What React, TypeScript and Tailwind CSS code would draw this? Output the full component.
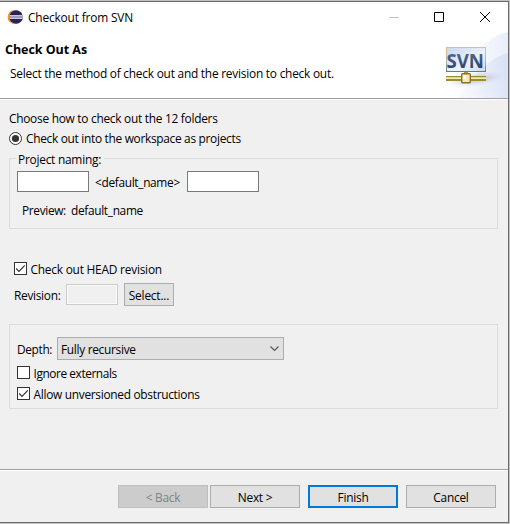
import type { ReactNode } from "react";

function Check({ checked, label, track }: { checked: boolean; label: string; track: string }) {
  return (
    <div className="flex h-[13px] items-center gap-[3.5px]">
      <span className="flex size-[13px] shrink-0 border border-[#333] bg-white">
        {checked && (
          <svg width="11" height="11" viewBox="0 0 11 11" fill="none" stroke="#333" strokeWidth="1.2">
            <path d="M1.2 5.5 L4 8.3 L9.8 2.4" />
          </svg>
        )}
      </span>
      <span className={track}>{label}</span>
    </div>
  );
}

function Button({ children, kind }: { children: ReactNode; kind: "disabled" | "normal" | "primary" }) {
  const look = {
    disabled: "border border-[#bfbfbf] bg-[#ccc] text-[#838383]",
    normal: "border border-[#adadad] bg-[#e1e1e1]",
    primary: "border-2 border-[#0078d7] bg-[#e1e1e1]",
  }[kind];
  return (
    <button className={`flex h-[23px] w-[90px] items-center justify-center tracking-[-0.25px] ${look}`}>{children}</button>
  );
}

function EclipseIcon() {
  return (
    <svg width="16" height="16" viewBox="0 0 16 16">
      <circle cx="7.6" cy="8" r="7" fill="#f7941e" />
      <circle cx="9" cy="8" r="7" fill="#fbe3c8" />
      <circle cx="9" cy="8" r="6.8" fill="#2c2255" />
      <path d="M2.6 6h13v1h-13zM2.6 9h13v1h-13z" fill="#c9c6d8" />
      <path d="M2 7h14v2H2z" fill="#a09cbd" />
    </svg>
  );
}

function SvnBanner() {
  return (
    <svg width="75" height="66" viewBox="0 0 75 66">
      <defs>
        <linearGradient id="sky" x1="0" y1="0" x2="1" y2="0">
          <stop offset="0" stopColor="#fff" />
          <stop offset="0.5" stopColor="#f8fafe" />
          <stop offset="1" stopColor="#e9eefa" />
        </linearGradient>
        <linearGradient id="sky2" x1="0" y1="0.6" x2="1" y2="0.4">
          <stop offset="0" stopColor="#f8faff" />
          <stop offset="1" stopColor="#d9e2f6" />
        </linearGradient>
        <linearGradient id="screen" x1="0" y1="0" x2="1" y2="1">
          <stop offset="0" stopColor="#c8d8f0" />
          <stop offset="0.6" stopColor="#eef3fb" />
          <stop offset="1" stopColor="#cbd9ef" />
        </linearGradient>
        <linearGradient id="frame" x1="0" y1="0" x2="0" y2="1">
          <stop offset="0" stopColor="#dfbd91" />
          <stop offset="0.6" stopColor="#aeb5aa" />
          <stop offset="1" stopColor="#55857f" />
        </linearGradient>
        <linearGradient id="letters" x1="0" y1="0" x2="0" y2="1">
          <stop offset="0" stopColor="#65779c" />
          <stop offset="1" stopColor="#1e346c" />
        </linearGradient>
        <radialGradient id="shade">
          <stop offset="0" stopColor="#b5afca" />
          <stop offset="1" stopColor="#d9dcef" stopOpacity="0" />
        </radialGradient>
      </defs>
      <path d="M75 0C62 2 50 13 40 22L8 66H75Z" fill="url(#sky)" />
      <path d="M75 21C61 24 49 35 39 47L25 66H75Z" fill="url(#sky2)" />
      <ellipse cx="43" cy="47" rx="31" ry="7" fill="url(#shade)" transform="rotate(-7 43 47)" />
      <rect x="13.5" y="15.5" width="39" height="24" fill="url(#screen)" stroke="url(#frame)" />
      <text
        x="13.5"
        y="35.5"
        textLength="37.5"
        lengthAdjust="spacingAndGlyphs"
        fontFamily="'Open Sans', sans-serif"
        fontSize="20"
        fontWeight="700"
        fill="url(#letters)"
      >
        SVN
      </text>
      <path d="M31 40h4v3h-4z" fill="#a99d3c" />
      <path d="M13 44h40v5H13z" fill="#9c8c31" />
      <path d="M13 45.3h40v1.7H13z" fill="#f4edb2" />
      <rect x="28.7" y="41.7" width="8.6" height="9" rx="0.8" fill="#fbe5bd" stroke="#89752a" strokeWidth="1.4" />
      <path d="M30 43h3v4h-3z" fill="#fff8e8" />
    </svg>
  );
}

export default function App() {
  return (
    <div className="h-[524px] w-[510px] overflow-hidden bg-[#c2c2c2] pt-px font-['Open_Sans','Noto_Sans',sans-serif] text-[11.9px] leading-4 whitespace-nowrap text-black">
      <div className="flex h-[522px] w-[509px] flex-col border-y border-r border-[#6b6b6b] bg-[#f0f0f0]">
        <header className="flex h-[97px] shrink-0 flex-col border-b border-[#a0a0a0] bg-white">
          <div className="flex h-[30px] shrink-0 items-center pl-[7px]">
            <EclipseIcon />
            <span className="ml-[5px] tracking-[-0.17px]">Checkout from SVN</span>
            <svg className="ml-auto" width="119" height="28" viewBox="0 0 119 28" fill="none" stroke="#000">
              <path d="M0 14.5h10" stroke="#c4c4c4" />
              <path d="M45.5 9.5h9v9h-9z" />
              <path d="M91 9l10 10M101 9l-10 10" />
            </svg>
          </div>
          <div className="flex grow justify-between">
            <div className="flex flex-col pt-2">
              <h1 className="pl-[5px] text-[12.5px] leading-5 font-bold tracking-[-0.05px]">Check Out As</h1>
              <p className="mt-[5px] pl-[10px] tracking-[-0.23px]">Select the method of check out and the revision to check out.</p>
            </div>
            <SvnBanner />
          </div>
        </header>

        <main className="flex h-[370px] shrink-0 flex-col border-t border-white px-[9px] pt-[10px]">
          <p className="tracking-[-0.27px]">Choose how to check out the 12 folders</p>
          <div className="mt-1 flex h-4 items-center gap-1">
            <svg width="13" height="13" viewBox="0 0 13 13">
              <circle cx="6.5" cy="6.5" r="6" fill="#fff" stroke="#333" />
              <circle cx="6.5" cy="6.5" r="3.6" fill="#333" />
            </svg>
            <span className="tracking-[-0.3px]">Check out into the workspace as projects</span>
          </div>
          <section className="mt-[12px] h-[71px] w-[489px] shrink-0 border border-[#dcdcdc]">
            <div className="-mt-2 ml-[6px] flex h-4 w-[88px] bg-[#f0f0f0] pl-[2px] tracking-[-0.24px]">Project naming:</div>
            <div className="mt-1 ml-[7px] flex h-[21px] items-center">
              <span className="h-[21px] w-[72px] border border-[#7a7a7a] bg-white" />
              <span className="w-[98px] pl-[6px] tracking-[-0.33px]">&lt;default_name&gt;</span>
              <span className="h-[21px] w-[72px] border border-[#7a7a7a] bg-white" />
            </div>
            <div className="mt-[10px] ml-[12px] flex">
              <span className="w-[49px] tracking-[-0.35px]">Preview:</span>
              <span className="tracking-[-0.33px]">default_name</span>
            </div>
          </section>
          <div className="mt-[33px] ml-[5px]">
            <Check checked label="Check out HEAD revision" track="tracking-[-0.22px]" />
          </div>
          <div className="mt-2 ml-[5px] flex h-[23px] shrink-0 items-center">
            <span className="w-[52px] tracking-[-0.3px]">Revision:</span>
            <span className="h-[21px] w-[52px] border border-[#ccc] bg-[#f0f0f0] shadow-[inset_0_0_0_1px_#fafafa]" />
            <button className="ml-[6px] flex h-[23px] w-[50px] items-center justify-center border border-[#adadad] bg-[#e1e1e1] tracking-[-0.2px]">
              Select...
            </button>
          </div>
          <section className="mt-[18px] flex h-[85px] w-[489px] shrink-0 flex-col border border-[#dcdcdc] pt-3 pl-[7px]">
            <div className="flex h-[23px] items-center">
              <span className="w-[40px] tracking-[-0.35px]">Depth:</span>
              <div className="flex h-[23px] w-[227px] items-center justify-between border border-[#adadad] bg-[#e1e1e1] pr-[3px] pl-[3px]">
                <span className="tracking-[-0.3px]">Fully recursive</span>
                <svg width="11" height="11" viewBox="0 0 11 11" fill="none" stroke="#555" strokeWidth="1.1">
                  <path d="M1.5 3.5l4 4 4-4" />
                </svg>
              </div>
            </div>
            <div className="mt-[6px] flex flex-col gap-2">
              <Check checked={false} label="Ignore externals" track="tracking-[-0.43px]" />
              <Check checked label="Allow unversioned obstructions" track="tracking-[-0.29px]" />
            </div>
          </section>
        </main>

        <footer className="flex grow justify-end border-t border-[#a0a0a0] pr-3 shadow-[inset_0_1px_0_#fff]">
          <div className="mt-[15px] flex">
            <Button kind="disabled">&lt; Back</Button>
            <div className="ml-[2px] flex gap-2">
              <Button kind="normal">Next &gt;</Button>
              <Button kind="primary">Finish</Button>
              <Button kind="normal">Cancel</Button>
            </div>
          </div>
        </footer>
      </div>
    </div>
  );
}
